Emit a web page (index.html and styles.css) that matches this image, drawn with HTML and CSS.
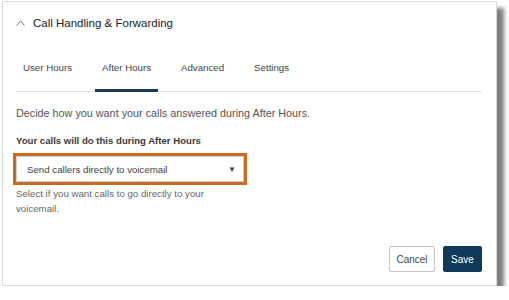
FILE: index.html
```html
<!DOCTYPE html>
<html>
<head>
<meta charset="utf-8">
<link rel="stylesheet" href="styles.css">
</head>
<body>
<div class="card">
  <div class="header">
    <svg class="chev" width="9" height="6" viewBox="0 0 9 6"><path d="M0.5 5.5 L4.5 1 L8.5 5.5" fill="none" stroke="#777" stroke-width="1"/></svg>
    <span class="title">Call Handling &amp; Forwarding</span>
  </div>
  <div class="tabs">
    <div class="tab">User Hours</div>
    <div class="tab active">After Hours</div>
    <div class="tab">Advanced</div>
    <div class="tab">Settings</div>
  </div>
  <p class="desc">Decide how you want your calls answered during After Hours.</p>
  <div class="label">Your calls will do this during After Hours</div>
  <div class="field">
    <div class="select"><span>Send callers directly to voicemail</span><span class="arrow">▼</span></div>
    <p class="help">Select if you want calls to go directly to your voicemail.</p>
  </div>
  <div class="actions">
    <button class="btn cancel">Cancel</button>
    <button class="btn save">Save</button>
  </div>
</div>
</body>
</html>
```
FILE: styles.css
```css
html, body { margin: 0; padding: 0; background: #fff; }
body { font-family: "Liberation Sans", Arial, sans-serif; }
.card {
  margin: 1px 0 0 2px;
  border: 1px solid #dcdcdc;
  background: #fff;
  box-shadow: 7px 7px 4px rgba(0,0,0,0.5);
  padding: 0 14px 13px 13px;
  box-sizing: border-box;
  width: 495px;
}
.header {
  height: 42px;
  display: flex;
  align-items: center;
  gap: 8px;
}
.chev { display: block; margin-top: -1px; }
.title { font-size: 11.5px; color: #222; }
.tabs {
  margin-top: 12px;
  display: flex;
  gap: 16px;
  border-bottom: 1px solid #e4e4e4;
}
.tab {
  padding: 0 7px 9px;
  line-height: 24px;
  font-size: 9.7px;
  color: #444;
  border-bottom: 2px solid transparent;
}
.tab.active {
  border-bottom: 3px solid #1b3a57;
  margin-bottom: -1px;
}
.desc {
  margin: 14px 0 0;
  font-size: 10.8px;
  line-height: 15px;
  color: #555;
}
.label {
  margin-top: 12px;
  font-size: 9.6px;
  font-weight: bold;
  line-height: 15px;
  color: #3a3a3a;
}
.field { width: 228px; margin-top: 8px; }
.select {
  height: 26px;
  box-sizing: border-box;
  border: 1px solid #cfcfcf;
  outline: 3px solid #cc6a1f;
  display: flex;
  align-items: center;
  justify-content: space-between;
  padding: 0 7px 0 10px;
  font-size: 9.7px;
  color: #444;
}
.arrow { font-size: 8px; color: #444; }
.help {
  margin: 4px 0 0;
  font-size: 9.7px;
  line-height: 15px;
  color: #666;
}
.actions {
  margin-top: 30px;
  display: flex;
  justify-content: flex-end;
  gap: 8px;
}
.btn {
  height: 26px;
  font-family: "Liberation Sans", Arial, sans-serif;
  font-size: 10px;
  border-radius: 2px;
  padding: 0;
}
.cancel {
  width: 46px;
  background: #fff;
  border: 1px solid #c4c4c4;
  color: #444;
}
.save {
  width: 39px;
  background: #10395a;
  border: 1px solid #10395a;
  color: #fff;
}
```
